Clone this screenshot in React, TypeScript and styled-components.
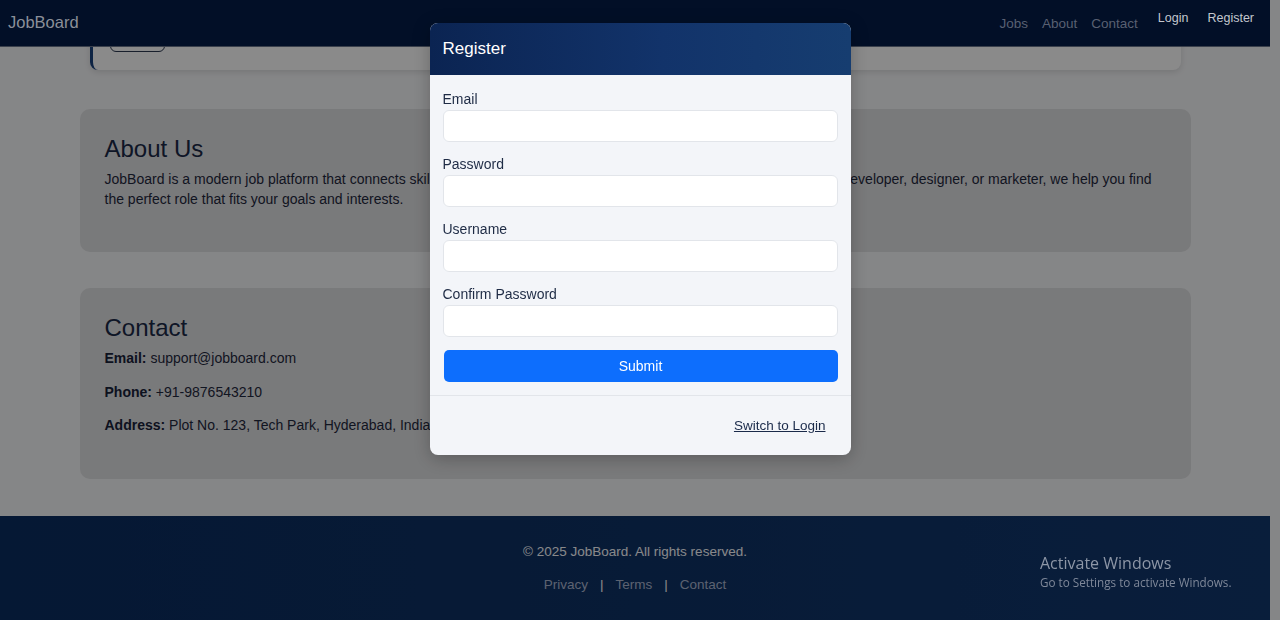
import React from "react";
import styled, { createGlobalStyle } from "styled-components";

const GlobalStyle = createGlobalStyle`
  html, body { margin: 0; padding: 0; }
  body {
    padding-right: 10px;
    height: 620px;
    overflow: hidden;
    background: #f6f7f9;
    font-family: "Liberation Sans", Arial, sans-serif;
  }
  * { box-sizing: border-box; }
`;

const NavBar = styled.header`
  position: fixed;
  top: 0;
  left: 0;
  right: 10px;
  height: 47px;
  z-index: 1045;
  background: #020f27;
  border-bottom: 1px solid #3a404c;
  display: flex;
  align-items: center;
  justify-content: space-between;
  padding: 0 16px 0 8px;
`;

const Brand = styled.a`
  font-size: 16.5px;
  color: #8b8f99;
  text-decoration: none;
  margin-top: -1px;
`;

const NavRight = styled.nav`
  display: flex;
  align-items: center;
  height: 100%;
`;

const NavLinks = styled.div`
  display: flex;
  gap: 14px;
  margin-right: 20px;
  margin-top: 1px;
`;

const NavLink = styled.a`
  font-size: 13.5px;
  color: #596072;
  text-decoration: none;
`;

const AuthGroup = styled.div`
  display: flex;
  gap: 19px;
  align-self: flex-start;
  margin-top: 11px;
`;

const AuthButton = styled.button`
  background: none;
  border: 0;
  padding: 0;
  color: #c3c7ce;
  font-family: "Liberation Sans", Arial, sans-serif;
  font-size: 12.5px;
`;

const Main = styled.main`
  width: 1111px;
  margin: 0 auto;
`;

const JobCard = styled.div`
  margin: 0 10px;
  background: #ffffff;
  border-left: 3px solid #1b437f;
  border-radius: 8px;
  box-shadow: 0 2px 6px rgba(0, 0, 0, 0.12);
  padding: 26px 20px 18px 17px;
`;

const OutlineButton = styled.button`
  display: block;
  width: 55px;
  height: 26px;
  border: 1px solid #2e3a52;
  border-radius: 6px;
  background: transparent;
`;

const Section = styled.section<{ $gap: number }>`
  margin-top: ${(p) => p.$gap}px;
  background: #e0e1e3;
  border-radius: 10px;
  padding: 25px;
`;

const SectionTitle = styled.h2`
  margin: 0 0 6px;
  font-size: 24px;
  line-height: 29px;
  font-weight: 400;
  color: #1a2947;
`;

const Para = styled.p`
  margin: 0 0 18px;
  max-width: 1050px;
  font-size: 14px;
  line-height: 20px;
  color: #1f283d;
`;

const InfoLine = styled.p`
  margin: 0 0 13.5px;
  font-size: 14px;
  line-height: 20px;
  color: #1f283d;
  &:last-child { margin-bottom: 19px; }
  strong { color: #18223a; }
`;

const Footer = styled.footer`
  margin-top: 37px;
  height: 104px;
  background: linear-gradient(90deg, #0b2d60 0%, #0e3266 50%, #12386e 100%);
  padding-top: 27px;
  text-align: center;
`;

const Copy = styled.div`
  font-size: 13.5px;
  line-height: 17px;
  color: #fbfcff;
`;

const FooterLinks = styled.div`
  margin-top: 16px;
  font-size: 13.5px;
  line-height: 17px;
  color: #ffffff;
`;

const FooterLink = styled.a`
  color: #aab6d0;
  text-decoration: none;
`;

const Sep = styled.span`
  margin: 0 12px;
`;

const Backdrop = styled.div`
  position: fixed;
  inset: 0;
  z-index: 1040;
  background: rgba(0, 0, 0, 0.46);
`;

const ModalLayer = styled.div`
  position: fixed;
  inset: 0;
  z-index: 1050;
  display: flex;
  justify-content: center;
  align-items: flex-start;
  padding-top: 23px;
`;

const Modal = styled.div`
  width: 421px;
  background: #f3f5f9;
  border-radius: 8px;
  overflow: hidden;
  box-shadow: 0 4px 18px rgba(0, 0, 0, 0.25);
`;

const ModalHeader = styled.div`
  height: 52px;
  display: flex;
  align-items: center;
  padding: 0 13px;
  background: linear-gradient(90deg, #0b2452 0%, #12336a 55%, #163d70 100%);
`;

const ModalTitle = styled.h5`
  margin: 0;
  font-size: 17px;
  font-weight: 400;
  color: #ffffff;
`;

const ModalBody = styled.form`
  padding: 16px 13px 13px;
  border-bottom: 1px solid #e2e5ea;
  display: flex;
  flex-direction: column;
`;

const Field = styled.div`
  margin-bottom: 14px;
  &:nth-of-type(4) { margin-bottom: 13px; }
`;

const Label = styled.label`
  display: block;
  font-size: 14px;
  line-height: 17px;
  margin-bottom: 2px;
  color: #1e2b45;
`;

const Input = styled.input`
  display: block;
  width: 100%;
  height: 32px;
  background: #ffffff;
  border: 1px solid #e2e5ea;
  border-radius: 6px;
  outline: none;
`;

const SubmitButton = styled.button`
  width: calc(100% - 1px);
  height: 32px;
  margin-left: 1px;
  border: 0;
  border-radius: 5px;
  background: #0d6efd;
  color: #ffffff;
  font-family: "Liberation Sans", Arial, sans-serif;
  font-size: 14px;
`;

const ModalFooter = styled.div`
  height: 59px;
  display: flex;
  align-items: center;
  justify-content: flex-end;
  padding: 0 25px 0 0;
`;

const SwitchLink = styled.button`
  background: none;
  border: 0;
  padding: 0;
  font-family: "Liberation Sans", Arial, sans-serif;
  font-size: 13.5px;
  color: #1a2a4a;
  text-decoration: underline;
`;

const Watermark = styled.div`
  position: fixed;
  left: 1040px;
  top: 552px;
  z-index: 2000;
  font-family: "Open Sans", "Noto Sans", sans-serif;
  pointer-events: none;
`;

const WmTitle = styled.div`
  font-size: 16px;
  line-height: 22px;
  color: #8d96a6;
`;

const WmSub = styled.div`
  font-size: 11.7px;
  line-height: 16px;
  color: #7f8899;
`;

const fields = ["Email", "Password", "Username", "Confirm Password"];

export default function App() {
  return (
    <>
      <GlobalStyle />
      <NavBar>
        <Brand href="#">JobBoard</Brand>
        <NavRight>
          <NavLinks>
            <NavLink href="#">Jobs</NavLink>
            <NavLink href="#">About</NavLink>
            <NavLink href="#">Contact</NavLink>
          </NavLinks>
          <AuthGroup>
            <AuthButton>Login</AuthButton>
            <AuthButton>Register</AuthButton>
          </AuthGroup>
        </NavRight>
      </NavBar>

      <Main>
        <JobCard>
          <OutlineButton aria-label="View job" />
        </JobCard>

        <Section $gap={39}>
          <SectionTitle>About Us</SectionTitle>
          <Para>
            JobBoard is a modern job platform that connects skilled professionals with top companies worldwide.
            Whether you're a developer, designer, or marketer, we help you find the perfect role that fits your
            goals and interests.
          </Para>
        </Section>

        <Section $gap={36}>
          <SectionTitle>Contact</SectionTitle>
          <InfoLine>
            <strong>Email:</strong> support@jobboard.com
          </InfoLine>
          <InfoLine>
            <strong>Phone:</strong> +91-9876543210
          </InfoLine>
          <InfoLine>
            <strong>Address:</strong> Plot No. 123, Tech Park, Hyderabad, India
          </InfoLine>
        </Section>
      </Main>

      <Footer>
        <Copy>© 2025 JobBoard. All rights reserved.</Copy>
        <FooterLinks>
          <FooterLink href="#">Privacy</FooterLink>
          <Sep>|</Sep>
          <FooterLink href="#">Terms</FooterLink>
          <Sep>|</Sep>
          <FooterLink href="#">Contact</FooterLink>
        </FooterLinks>
      </Footer>

      <Backdrop />

      <ModalLayer>
        <Modal>
          <ModalHeader>
            <ModalTitle>Register</ModalTitle>
          </ModalHeader>
          <ModalBody onSubmit={(e) => e.preventDefault()}>
            {fields.map((f) => (
              <Field key={f}>
                <Label>{f}</Label>
                <Input type={f.includes("Password") ? "password" : f === "Email" ? "email" : "text"} />
              </Field>
            ))}
            <SubmitButton type="submit">Submit</SubmitButton>
          </ModalBody>
          <ModalFooter>
            <SwitchLink>Switch to Login</SwitchLink>
          </ModalFooter>
        </Modal>
      </ModalLayer>

      <Watermark>
        <WmTitle>Activate Windows</WmTitle>
        <WmSub>Go to Settings to activate Windows.</WmSub>
      </Watermark>
    </>
  );
}
